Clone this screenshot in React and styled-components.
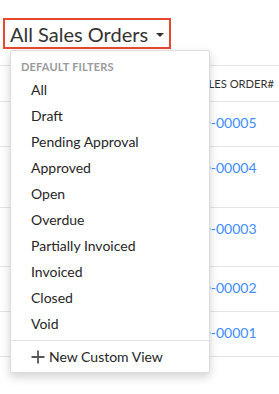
import React from 'react';
import styled, { createGlobalStyle } from 'styled-components';

const GlobalStyle = createGlobalStyle`
  * {
    margin: 0;
    padding: 0;
    box-sizing: border-box;
  }

  body {
    font-family: Lato, 'Open Sans', sans-serif;
    background: #ffffff;
    color: #333333;
    overflow: hidden;
    -webkit-font-smoothing: antialiased;
  }
`;

const Page = styled.div`
  position: relative;
  width: 279px;
  height: 394px;
  padding-top: 18px;
`;

const TitleBar = styled.div`
  padding-left: 3px;
  height: 47px;
`;

const ViewButton = styled.button`
  display: inline-flex;
  align-items: center;
  gap: 8px;
  height: 31px;
  padding: 0 5px 0 5px;
  border: 2px solid #e5492f;
  background: #fff;
  font-family: inherit;
  font-size: 20px;
  color: #333;
  cursor: pointer;
`;

const Caret = styled.span`
  width: 0;
  height: 0;
  margin-top: 3px;
  border-left: 4px solid transparent;
  border-right: 4px solid transparent;
  border-top: 4px solid #333;
`;

const Table = styled.div`
  border-top: 1px solid #e4e4e4;
`;

const Row = styled.div`
  display: grid;
  grid-template-columns: 192px 1fr;
  height: ${p => p.$height}px;
  border-bottom: 1px solid #e4e4e4;
  align-items: ${p => (p.$head ? 'center' : 'start')};
`;

const HeadCell = styled.div`
  grid-column: 2;
  padding-left: 3px;
  font-size: 11.2px;
  color: #333;
  white-space: nowrap;
`;

const LinkCell = styled.a`
  grid-column: 2;
  padding-top: 12px;
  font-size: 14px;
  color: #408dfb;
  text-decoration: none;
  white-space: nowrap;
`;

const Menu = styled.div`
  position: absolute;
  left: 10px;
  top: 50px;
  width: 200px;
  background: #fff;
  border: 1px solid #dcdcdc;
  border-radius: 2px;
  box-shadow: 0 4px 10px rgba(0, 0, 0, 0.18);
  padding-top: 6px;
`;

const MenuHeading = styled.div`
  height: 20px;
  line-height: 20px;
  padding-left: 10px;
  font-size: 11px;
  font-weight: 700;
  letter-spacing: 0.2px;
  color: #999;
`;

const MenuItem = styled.div`
  height: 26px;
  line-height: 26px;
  padding-left: 20px;
  font-size: 14px;
  color: #262626;
  cursor: pointer;
`;

const MenuFooter = styled.div`
  display: flex;
  align-items: center;
  gap: 4px;
  height: 32px;
  margin-top: 3px;
  padding-left: 20px;
  border-top: 1px solid #e4e4e4;
  font-size: 14px;
  color: #262626;
  cursor: pointer;
`;

const filters = [
  'All',
  'Draft',
  'Pending Approval',
  'Approved',
  'Open',
  'Overdue',
  'Partially Invoiced',
  'Invoiced',
  'Closed',
  'Void',
];

const orders = [
  { no: 'SO-00005', height: 45 },
  { no: 'SO-00004', height: 61 },
  { no: 'SO-00003', height: 59 },
  { no: 'SO-00002', height: 45 },
  { no: 'SO-00001', height: 45 },
];

function PlusIcon() {
  return (
    <svg width="14" height="14" viewBox="0 0 14 14">
      <path d="M7 0.5v13M0.5 7h13" stroke="#555" strokeWidth="1.8" fill="none" />
    </svg>
  );
}

export default function App() {
  return (
    <>
      <GlobalStyle />
      <Page>
        <TitleBar>
          <ViewButton>
            All Sales Orders
            <Caret />
          </ViewButton>
        </TitleBar>

        <Table>
          <Row $head $height={36}>
            <HeadCell>SALES ORDER#</HeadCell>
          </Row>
          {orders.map(o => (
            <Row key={o.no} $height={o.height}>
              <LinkCell href="#">{o.no}</LinkCell>
            </Row>
          ))}
        </Table>

        <Menu>
          <MenuHeading>DEFAULT FILTERS</MenuHeading>
          {filters.map(f => (
            <MenuItem key={f}>{f}</MenuItem>
          ))}
          <MenuFooter>
            <PlusIcon />
            New Custom View
          </MenuFooter>
        </Menu>
      </Page>
    </>
  );
}
